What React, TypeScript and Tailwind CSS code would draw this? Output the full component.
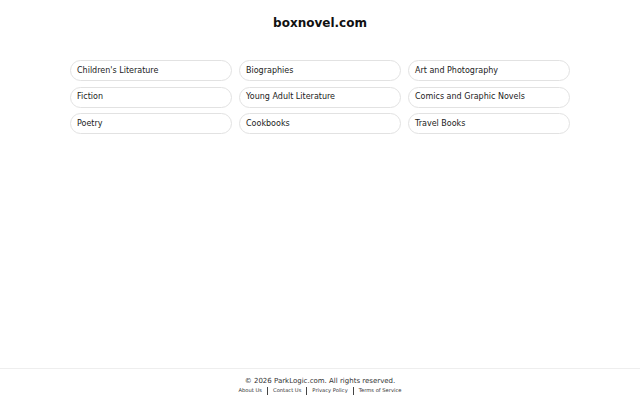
import React from "react";

const items = [
  "Children's Literature",
  "Biographies",
  "Art and Photography",
  "Fiction",
  "Young Adult Literature",
  "Comics and Graphic Novels",
  "Poetry",
  "Cookbooks",
  "Travel Books",
];

export default function App() {
  return (
    <div className="flex h-[400px] w-[640px] flex-col bg-white font-['DejaVu_Sans',sans-serif] text-[#222]">
      <div className="flex-1">
        <h1 className="pt-[15px] text-center text-[12px] font-bold leading-[16px] text-[#111]">boxnovel.com</h1>
        <div className="mx-auto mt-[29px] grid w-[500px] grid-cols-3 gap-x-[7px] gap-y-[5.5px]">
          {items.map((t) => (
            <a
              key={t}
              href="#"
              className="flex h-[21px] items-center rounded-full border border-[#e2e2e2] px-[6px] text-[8px] text-[#222]"
            >
              {t}
            </a>
          ))}
        </div>
      </div>
      <footer className="flex h-[32px] flex-col items-center border-t border-[#eeeeee] pt-[7px]">
        <p className="text-[7px] leading-[10px] text-[#333]">© 2026 ParkLogic.com. All rights reserved.</p>
        <div className="flex items-center text-[5.2px] leading-[9px] text-[#333]">
          <a href="#">About Us</a>
          <span className="mx-[5px] h-[8px] w-px bg-[#444]" />
          <a href="#">Contact Us</a>
          <span className="mx-[5px] h-[8px] w-px bg-[#444]" />
          <a href="#">Privacy Policy</a>
          <span className="mx-[5px] h-[8px] w-px bg-[#444]" />
          <a href="#">Terms of Service</a>
        </div>
      </footer>
    </div>
  );
}
